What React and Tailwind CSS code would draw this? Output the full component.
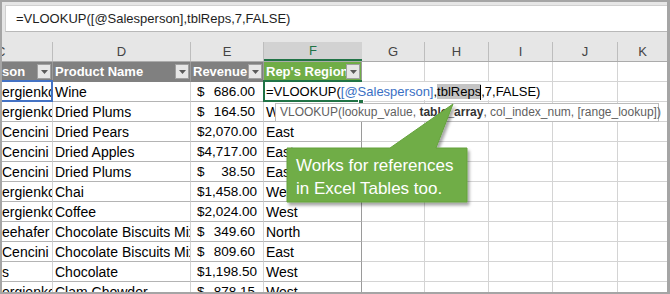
import React from 'react';

const rows = [
  ['ergienko', 'Wine', '686.00', ''],
  ['ergienko', 'Dried Plums', '164.50', 'West'],
  ['Cencini', 'Dried Pears', '2,070.00', 'East'],
  ['Cencini', 'Dried Apples', '4,717.00', 'East'],
  ['Cencini', 'Dried Plums', '38.50', 'East'],
  ['ergienko', 'Chai', '1,458.00', 'West'],
  ['ergienko', 'Coffee', '2,024.00', 'West'],
  ['eehafer', 'Chocolate Biscuits Mix', '349.60', 'North'],
  ['Cencini', 'Chocolate Biscuits Mix', '809.60', 'East'],
  ['s', 'Chocolate', '1,198.50', 'West'],
  ['ergienko', 'Clam Chowder', '878.15', 'West'],
];

function FilterBtn() {
  return (
    <div className="w-[14px] h-[15px] shrink-0 bg-[#e6e6e6] border border-[#a0a0a0] flex items-center justify-center mr-[1px]">
      <svg width="7" height="4" viewBox="0 0 7 4">
        <path d="M0 0H7L3.5 4Z" fill="#5a5a5a" />
      </svg>
    </div>
  );
}

function EmptyCells() {
  return (
    <>
      <div className="w-[63px] shrink-0 border-r border-r-[#d4d4d4] border-b border-b-[#d4d4d4]" />
      <div className="w-[64px] shrink-0 border-r border-r-[#d4d4d4] border-b border-b-[#d4d4d4]" />
      <div className="w-[64px] shrink-0 border-r border-r-[#d4d4d4] border-b border-b-[#d4d4d4]" />
      <div className="w-[65px] shrink-0 border-r border-r-[#d4d4d4] border-b border-b-[#d4d4d4]" />
      <div className="flex-1 border-b border-b-[#d4d4d4]" />
    </>
  );
}

function DataRow({ r }) {
  return (
    <div className="flex h-[20px] shrink-0 leading-[20px] text-black text-[14px]">
      <div className="w-[51px] shrink-0 overflow-hidden whitespace-nowrap border-r border-r-[#d4d4d4] border-b border-b-[#b4b4b4]">{r[0]}</div>
      <div className="w-[138px] shrink-0 overflow-hidden whitespace-nowrap pl-[2px] border-r border-r-[#d4d4d4] border-b border-b-[#b4b4b4]">{r[1]}</div>
      <div className="w-[73px] shrink-0 flex justify-between pl-[6px] pr-[8px] text-[13.5px] border-r border-r-[#d4d4d4] border-b border-b-[#b4b4b4]">
        <span>$</span>
        <span>{r[2]}</span>
      </div>
      <div className="w-[98px] shrink-0 overflow-hidden whitespace-nowrap pl-[2px] border-r border-r-[#9a9a9a] border-b border-b-[#b4b4b4]">{r[3]}</div>
      <EmptyCells />
    </div>
  );
}

export default function App() {
  return (
    <div className="w-[670px] h-[294px] relative overflow-hidden border-2 border-r-[3px] border-[#a5a5a5] bg-white font-['Liberation_Sans',Arial,sans-serif] text-[13px]">
      <div className="flex flex-col h-full">
        {/* formula region */}
        <div className="h-[30px] shrink-0 bg-[#e6e6e6] pt-[3px] pl-[3px]">
          <div className="h-[27px] bg-white border-t border-l border-[#d0d0d0] border-b border-b-[#b8b8b8] pl-[10px] leading-[25px] text-[#1e1e1e] whitespace-nowrap">
            =VLOOKUP([@Salesperson],tblReps,7,FALSE)
          </div>
        </div>
        <div className="h-[10px] shrink-0 bg-[#e6e6e6]" />
        {/* column headers */}
        <div className="flex h-[20px] shrink-0 bg-[#e6e6e6] border-b border-b-[#ababab] leading-[19px] text-[#444]">
          <div className="w-[51px] shrink-0 border-r border-r-[#bdbdbd] overflow-hidden">
            <span className="inline-block -ml-[6px]">C</span>
          </div>
          <div className="w-[138px] shrink-0 border-r border-r-[#bdbdbd] text-center">D</div>
          <div className="w-[73px] shrink-0 border-r border-r-[#bdbdbd] text-center">E</div>
          <div className="w-[98px] shrink-0 bg-[#d2d2d2] border-b-2 border-b-[#217346] text-center text-[#217346] leading-[18px]">F</div>
          <div className="w-[63px] shrink-0 border-r border-r-[#bdbdbd] text-center">G</div>
          <div className="w-[64px] shrink-0 border-r border-r-[#bdbdbd] text-center">H</div>
          <div className="w-[64px] shrink-0 border-r border-r-[#bdbdbd] text-center">I</div>
          <div className="w-[65px] shrink-0 border-r border-r-[#bdbdbd] text-center">J</div>
          <div className="flex-1 text-center">K</div>
        </div>
        {/* table header row */}
        <div className="flex h-[20px] shrink-0 font-bold text-white leading-[19px]">
          <div className="w-[51px] shrink-0 flex items-center bg-[#808080] border-r border-r-[#9a9a9a] border-b border-b-[#808080]">
            <span className="flex-1 overflow-hidden whitespace-nowrap">son</span>
            <FilterBtn />
          </div>
          <div className="w-[138px] shrink-0 flex items-center bg-[#808080] border-r border-r-[#9a9a9a] border-b border-b-[#808080] pl-[2px]">
            <span className="flex-1 overflow-hidden whitespace-nowrap">Product Name</span>
            <FilterBtn />
          </div>
          <div className="w-[73px] shrink-0 flex items-center bg-[#808080] border-r border-r-[#9a9a9a] border-b border-b-[#808080] pl-[2px]">
            <span className="flex-1 overflow-hidden whitespace-nowrap">Revenue</span>
            <FilterBtn />
          </div>
          <div className="w-[98px] shrink-0 flex items-center bg-[#70ad47] border-r border-r-[#9a9a9a] border-b border-b-[#70ad47] pl-[2px]">
            <span className="flex-1 overflow-hidden whitespace-nowrap">Rep's Region</span>
            <FilterBtn />
          </div>
          <EmptyCells />
        </div>
        {rows.map((r, i) => (
          <DataRow key={i} r={r} />
        ))}
      </div>

      {/* reference highlight on C */}
      <div className="absolute left-[-2px] top-[78px] w-[53px] h-[22px] border-2 border-[#4472c4]" />
      {/* active cell */}
      <div className="absolute left-[261px] top-[78px] w-[99px] h-[22px] border-2 border-[#217346]" />
      {/* edit overlay */}
      <div className="absolute left-[263px] top-[80px] w-[281px] h-[18px] bg-white leading-[20px] whitespace-nowrap pl-[1px] text-black">
        =VLOOKUP(<span className="text-[#3a6fc4]">[@Salesperson]</span>,<span className="bg-[#c4c4c4]">tblReps</span>
        <span className="inline-block w-px h-[15px] bg-black align-middle -ml-px" />,7,FALSE)
      </div>
      {/* fill handle */}
      <div className="absolute left-[356px] top-[97px] w-[6px] h-[6px] bg-[#217346] border border-white" />

      {/* tooltip */}
      <div className="absolute left-[273px] top-[101px] w-[384px] h-[19px] bg-white border border-[#bcbcbc] pl-[4px] text-[12px] leading-[17px] text-[#5f5f5f] whitespace-nowrap">
        VLOOKUP(lookup_value, <b className="text-[#333]">table_array</b>, col_index_num, [range_lookup])
      </div>

      {/* callout */}
      <svg className="absolute left-[280px] top-[98px]" width="200" height="112" viewBox="0 0 200 112">
        <defs>
          <filter id="sh" x="-10%" y="-10%" width="130%" height="130%">
            <feDropShadow dx="2" dy="3" stdDeviation="1.6" floodColor="#000" floodOpacity="0.35" />
          </filter>
        </defs>
        <path d="M5 48 H108 L171 4 L154 48 H185 V102 H5 Z" fill="#70ad47" stroke="#65a23d" strokeWidth="1" filter="url(#sh)" />
      </svg>
      <div className="absolute left-[294px] top-[152px] text-white text-[17px] leading-[23px] whitespace-nowrap">
        <div>Works for references</div>
        <div>in Excel Tables too.</div>
      </div>
    </div>
  );
}
